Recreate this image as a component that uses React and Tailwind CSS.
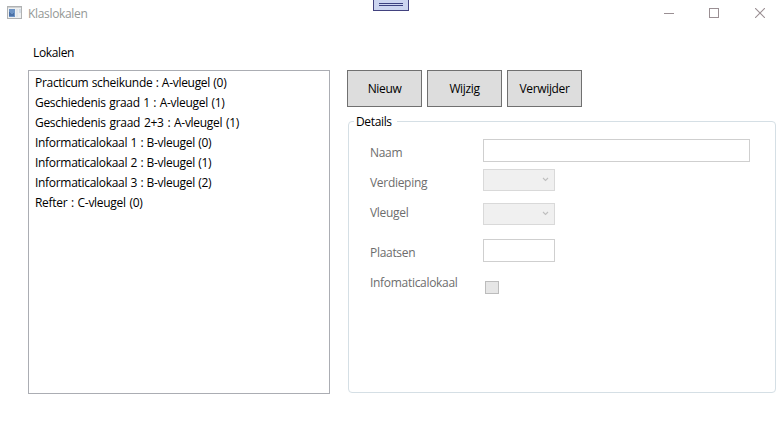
const rooms = [
  { label: 'Practicum scheikunde : A-vleugel (0)', spacing: '[word-spacing:0.5px]' },
  { label: 'Geschiedenis graad 1 : A-vleugel (1)', spacing: '[word-spacing:0.7px]' },
  { label: 'Geschiedenis graad 2+3 : A-vleugel (1)', spacing: '[word-spacing:1px]' },
  { label: 'Informaticalokaal 1 : B-vleugel (0)', spacing: '[word-spacing:0.5px]' },
  { label: 'Informaticalokaal 2 : B-vleugel (1)', spacing: '[word-spacing:0.5px]' },
  { label: 'Informaticalokaal 3 : B-vleugel (2)', spacing: '[word-spacing:0.5px]' },
  { label: 'Refter : C-vleugel (0)', spacing: '[word-spacing:0.9px]' },
];

function AppIcon() {
  return (
    <svg width="15" height="13" viewBox="0 0 15 13" shapeRendering="crispEdges">
      <rect x="0.5" y="0.5" width="14" height="12" fill="#eef0f1" stroke="#b0b2b3" />
      <rect x="1" y="1" width="13" height="1" fill="#cfd1d2" />
      <rect x="2" y="3" width="6" height="8" fill="#6c93c4" />
      <path d="M2 10V6l3 3 2-3v4z" fill="#4a70a6" />
      <rect x="9" y="3" width="2" height="8" fill="#e2e6ea" />
      <rect x="12" y="3" width="2" height="4" fill="#d3dbe4" />
    </svg>
  );
}

function TitleBar() {
  return (
    <header className="relative flex h-[27px] items-center justify-between">
      <div className="flex items-start gap-[6px] pl-[7px]">
        <div className="pt-px">
          <AppIcon />
        </div>
        <h1 className="text-[12px] tracking-[-0.33px] leading-[17px] text-[#949896]">Klaslokalen</h1>
      </div>
      <div className="absolute left-[373px] top-0 flex h-[11px] w-9 flex-col items-center gap-px border border-t-0 border-[#42427f] bg-[#ccd5f0] pt-[3px]">
        <div className="h-px w-6 bg-[#3b4080]" />
        <div className="h-px w-6 bg-[#3b4080]" />
      </div>
      <div className="-mt-px flex items-center gap-[35px] pr-[18px] text-[#9a8f93]">
        <svg width="10" height="10" shapeRendering="crispEdges"><path d="M0 5.5h10" stroke="currentColor" /></svg>
        <svg className="mr-px" width="10" height="10" shapeRendering="crispEdges"><rect x="0.5" y="0.5" width="9" height="9" fill="none" stroke="currentColor" /></svg>
        <svg width="10" height="10"><path d="M0 0l10 10M10 0L0 10" stroke="currentColor" strokeWidth="1.1" /></svg>
      </div>
    </header>
  );
}

function Button({ children }) {
  return (
    <button className="h-[37px] w-[75px] border border-[#707070] bg-[#dddddd] text-[12px] leading-4 tracking-[-0.35px] text-black">
      {children}
    </button>
  );
}

function Combo() {
  return (
    <div className="flex h-[22px] w-[72px] justify-end border border-[#d9d9d9] bg-[#f0f0f0] pr-[5px] pt-[7px]">
      <svg width="7" height="5"><path d="M1 1l2.5 2.5L6 1" fill="none" stroke="#bfbfbf" strokeWidth="1.1" /></svg>
    </div>
  );
}

function Field({ label, className, labelClass, children }) {
  return (
    <div className={`flex items-start ${className}`}>
      <span className={`w-[113px] text-[12px] leading-4 tracking-[-0.3px] text-[#6d6d6d] ${labelClass}`}>{label}</span>
      {children}
    </div>
  );
}

export default function App() {
  return (
    <div className="h-[440px] w-[783px] overflow-hidden bg-white font-['Open_Sans','Noto_Sans',sans-serif] text-black">
      <TitleBar />
      <main className="flex gap-[17px] pl-7">
        <section className="w-[302px] pt-[18px]">
          <h2 className="pl-[5px] text-[12px] leading-4 tracking-[-0.35px]">Lokalen</h2>
          <ul className="mt-[9px] h-[324px] border border-[#abadb3] pl-1.5 pt-[2px]">
            {rooms.map((room) => (
              <li key={room.label} className={`h-5 text-[12px] leading-5 tracking-[-0.3px] whitespace-nowrap ${room.spacing}`}>
                {room.label}
              </li>
            ))}
          </ul>
        </section>
        <section className="pt-[43px]">
          <div className="flex gap-[5px]">
            <Button>Nieuw</Button>
            <Button>Wijzig</Button>
            <Button>Verwijder</Button>
          </div>
          <fieldset className="ml-px mt-[6px] h-[280px] w-[428px] rounded-[4px] border border-[#d5dfe5] pl-[21px]">
            <legend className="-ml-4 h-[17px] pl-[2px] pr-[5px] text-[12px] leading-[17px] tracking-[-0.35px]">Details</legend>
            <Field label="Naam" className="mt-[9px] h-[30px]" labelClass="pt-[6px]">
              <input disabled className="h-[23px] w-[267px] border border-[#cfcfcf] bg-white" />
            </Field>
            <Field label="Verdieping" className="h-[34px]" labelClass="pt-[6px]">
              <Combo />
            </Field>
            <Field label="Vleugel" className="h-[36px]" labelClass="pt-[2px]">
              <Combo />
            </Field>
            <Field label="Plaatsen" className="h-[36px]" labelClass="pt-[6px]">
              <input disabled className="h-[23px] w-[72px] border border-[#cfcfcf] bg-white" />
            </Field>
            <Field label="Infomaticalokaal" className="h-[24px]">
              <span className="ml-[2px] mt-[6px] h-[13px] w-[14px] border border-[#bcbcbc] bg-[#e6e6e6]" />
            </Field>
          </fieldset>
        </section>
      </main>
    </div>
  );
}
